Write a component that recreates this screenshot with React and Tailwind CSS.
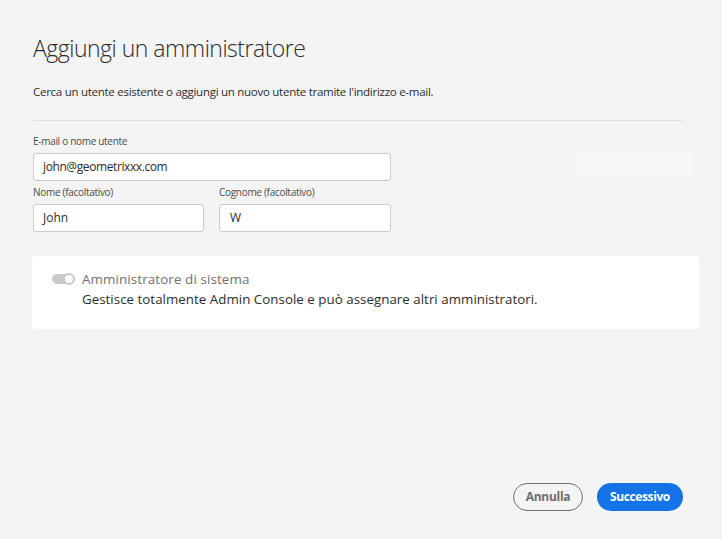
export default function App() {
  const font = { fontFamily: '"Open Sans", "Noto Sans", sans-serif' };
  return (
    <div className="w-[722px] h-[539px] bg-[#f4f4f4] flex flex-col relative overflow-hidden" style={font}>
      <div className="absolute left-[576px] top-[150px] w-[116px] h-[26px] bg-[#f7f7f7] rounded-[3px]"></div>
      <div className="px-[33px] pt-[33px] flex-1 flex flex-col">
        <h1 className="text-[23px] leading-[30px] font-light text-[#2c2c2c] tracking-[-0.5px]">Aggiungi un amministratore</h1>
        <p className="mt-[21px] text-[11.5px] leading-[16px] text-[#2c2c2c] tracking-[-0.27px]">Cerca un utente esistente o aggiungi un nuovo utente tramite l'indirizzo e-mail.</p>
        <div className="mt-[20px] w-[650px] h-px bg-[#e1e1e1]"></div>
        <div className="mt-[14px] flex flex-col w-[358px]">
          <label className="text-[10px] leading-[13px] text-[#4b4b4b] tracking-[-0.3px]">E-mail o nome utente</label>
          <div className="mt-[5px] h-[28px] bg-white border border-[#cacaca] rounded-[3px] flex items-center px-[9px] text-[12px] text-[#2c2c2c] tracking-[-0.4px]">john@geometrixxx.com</div>
          <div className="mt-[5px] flex gap-[15px]">
            <div className="flex flex-col w-[172px]">
              <label className="text-[10px] leading-[13px] text-[#4b4b4b] tracking-[-0.3px]">Nome (facoltativo)</label>
              <div className="mt-[5px] h-[28px] bg-white border border-[#cacaca] rounded-[3px] flex items-center px-[9px] text-[12px] text-[#2c2c2c]">John</div>
            </div>
            <div className="flex flex-col w-[173px]">
              <label className="text-[10px] leading-[13px] text-[#4b4b4b] tracking-[-0.3px]">Cognome (facoltativo)</label>
              <div className="mt-[5px] h-[28px] bg-white border border-[#cacaca] rounded-[3px] flex items-center px-[10px] text-[12px] text-[#2c2c2c]">W</div>
            </div>
          </div>
        </div>
        <div className="mt-[24px] -ml-px w-[667px] h-[73px] bg-white rounded-[4px] pl-[20px] pt-[14px]">
          <div className="flex items-center gap-[8px]">
            <div className="relative w-[22px] h-[10px] rounded-full bg-[#c9c9c9]">
              <div className="absolute right-[-1px] top-[-1px] w-[12px] h-[12px] rounded-full bg-white border-[2px] border-[#c9c9c9]"></div>
            </div>
            <span className="text-[13.4px] leading-[18px] text-[#707070] tracking-[0.1px]">Amministratore di sistema</span>
          </div>
          <p className="mt-[2px] ml-[30px] text-[13.3px] leading-[18px] text-[#2c2c2c] tracking-[0.04px]">Gestisce totalmente Admin Console e può assegnare altri amministratori.</p>
        </div>
      </div>
      <div className="flex justify-end gap-[14px] pr-[39px] pb-[28px]">
        <button className="h-[28px] w-[70px] rounded-full border-[1.5px] border-[#707070] text-[12px] font-bold text-[#6e6e6e] tracking-[-0.3px]">Annulla</button>
        <button className="h-[28px] w-[86px] rounded-full bg-[#1473e6] text-[12px] font-bold text-white tracking-[-0.4px]">Successivo</button>
      </div>
    </div>
  );
}
